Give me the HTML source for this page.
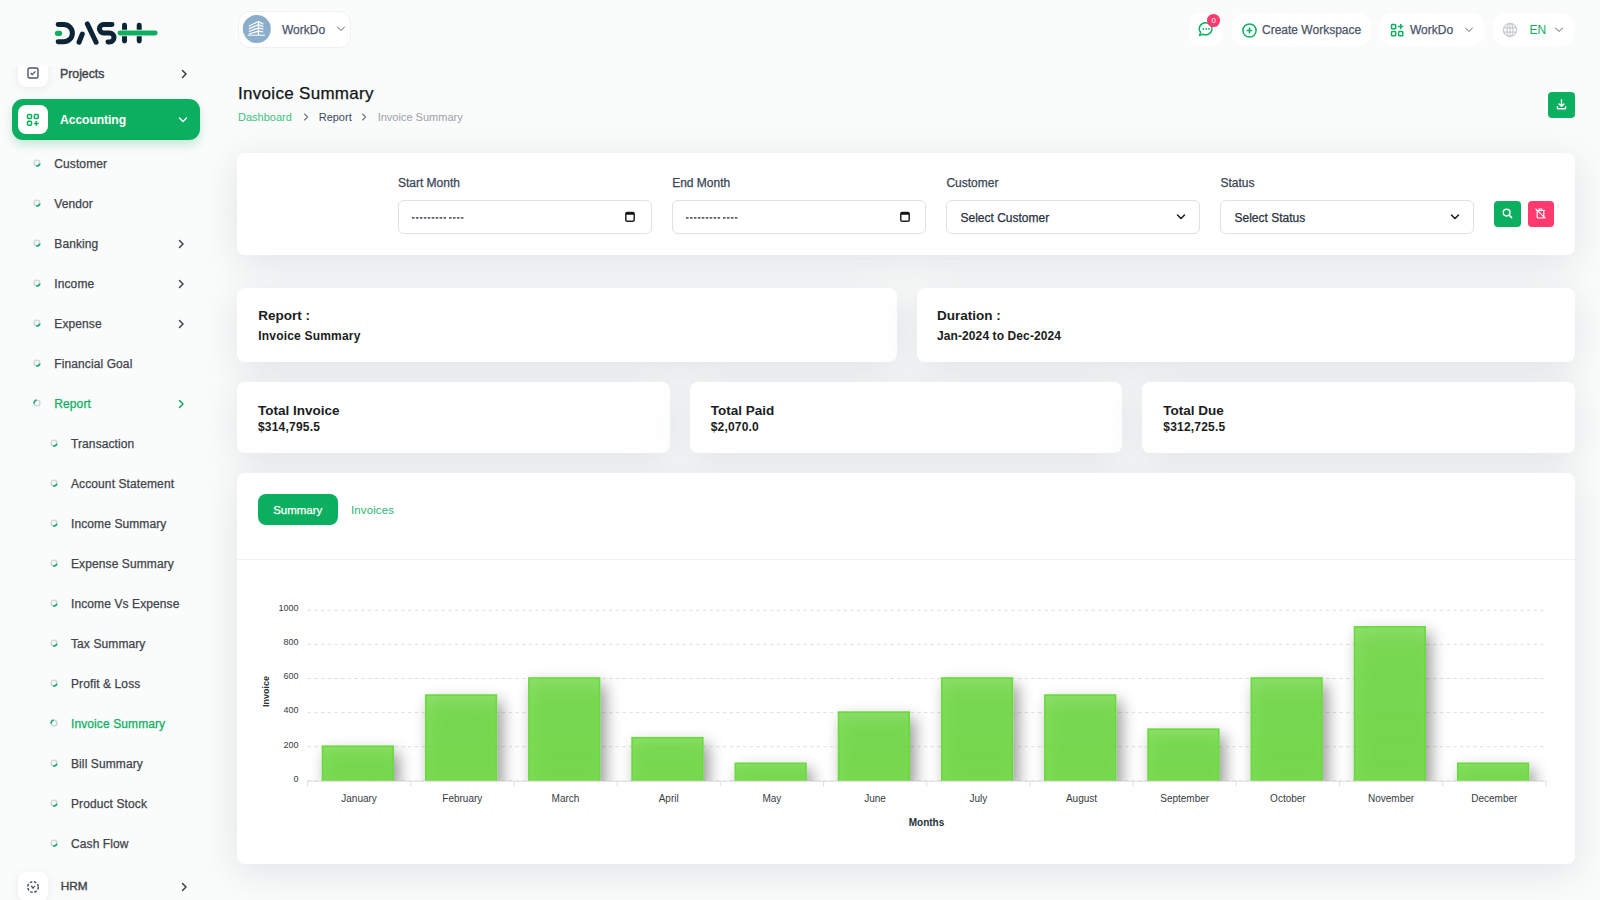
<!DOCTYPE html>
<html><head><meta charset="utf-8"><title>Invoice Summary</title>
<style>
html,body{margin:0;padding:0;}
body{width:1600px;height:900px;overflow:hidden;position:relative;background:#fafbfb;font-family:"Liberation Sans",sans-serif;}
.t{position:absolute;white-space:nowrap;line-height:1;}
.b{position:absolute;}
</style></head><body>
<svg class="b" style="left:40px;top:10px" width="140" height="45" viewBox="0 0 1600 514">
<g fill="none" stroke-linecap="round" stroke-width="57">
<path d="M208 166 H271 A99 99 0 0 1 271 364 H208" stroke="#0b2537"/>
<path d="M446 368 L483 275" stroke="#0b2537"/>
<path d="M541 159 L641 368" stroke="#0b2537"/>
<path d="M823 166 H727.5 A48.5 48.5 0 0 0 727.5 263 H794.5 A51.5 51.5 0 0 1 794.5 366 H777" stroke="#0b2537"/>
<path d="M966 173 V353 M1134 173 V353" stroke="#0b2537"/>
<path d="M200 266 H223" stroke="#0caf60" stroke-width="60"/>
<path d="M930 263 H1316" stroke="#fafbfb" stroke-width="74"/><path d="M915 263 H1316" stroke="#0caf60"/>
</g></svg><div class="b" style="left:0;top:66px;width:220px;height:40px;overflow:hidden"><div class="b" style="left:18px;top:-8px;width:29.5px;height:29px;background:#fff;border-radius:8px;box-shadow:0 2px 8px rgba(180,186,200,0.25);"></div><svg class="b" style="left:27px;top:1px" width="12" height="12" viewBox="0 0 12 12"><rect x="1" y="1" width="10" height="10" rx="1.5" fill="none" stroke="#4a5568" stroke-width="1.4"/><path d="M3.6 6 L5.3 7.6 L8.4 4.4" fill="none" stroke="#4a5568" stroke-width="1.3"/></svg></div><div class="t" style="left:60.00px;top:67.79px;font-size:12.3px;color:#3f434a;font-weight:400;-webkit-text-stroke:0.4px #3f434a;">Projects</div><svg class="b" style="left:180px;top:69px" width="8" height="10" viewBox="0 0 8 10"><path d="M2.5 1.5 L6 5 L2.5 8.5" fill="none" stroke="#3a3f46" stroke-width="1.5" stroke-linecap="round" stroke-linejoin="round"/></svg><div class="b" style="left:12px;top:99px;width:188px;height:41px;background:#0caf60;border-radius:11px;box-shadow:0 5px 10px rgba(12,175,96,0.22);"></div><div class="b" style="left:18px;top:105px;width:29.5px;height:29px;background:#fff;border-radius:8px;"></div><svg class="b" style="left:26px;top:113px" width="14" height="14" viewBox="0 0 14 14"><g fill="none" stroke="#0caf60" stroke-width="1.5"><rect x="1.5" y="1.5" width="4" height="4" rx="1"/><rect x="8.3" y="1.5" width="4" height="4" rx="1"/><rect x="1.5" y="8.3" width="4" height="4" rx="1"/><path d="M10.3 8 V12.8 M7.9 10.4 H12.7"/></g></svg><div class="t" style="left:60.00px;top:114.17px;font-size:12.2px;color:#fff;font-weight:700;letter-spacing:-0.1px;">Accounting</div><svg class="b" style="left:178px;top:115.5px" width="10" height="8" viewBox="0 0 10 8"><path d="M1.5 2 L5 5.5 L8.5 2" fill="none" stroke="#fff" stroke-width="1.3" stroke-linecap="round" stroke-linejoin="round"/></svg><svg class="b" style="left:32.1px;top:157.8px" width="10" height="10" viewBox="0 0 10 10"><circle cx="5" cy="5" r="2.9" fill="none" stroke="#cdd3dc" stroke-width="1.4"/><path d="M7.8 5.6 A2.9 2.9 0 0 1 4.2 7.8" fill="none" stroke="#0caf60" stroke-width="1.6"/></svg><div class="t" style="left:54.30px;top:157.84px;font-size:12px;color:#3f434a;font-weight:400;-webkit-text-stroke:0.25px #3f434a;letter-spacing:0.1px;">Customer</div><svg class="b" style="left:32.1px;top:197.8px" width="10" height="10" viewBox="0 0 10 10"><circle cx="5" cy="5" r="2.9" fill="none" stroke="#cdd3dc" stroke-width="1.4"/><path d="M7.8 5.6 A2.9 2.9 0 0 1 4.2 7.8" fill="none" stroke="#0caf60" stroke-width="1.6"/></svg><div class="t" style="left:54.30px;top:197.84px;font-size:12px;color:#3f434a;font-weight:400;-webkit-text-stroke:0.25px #3f434a;letter-spacing:0.1px;">Vendor</div><svg class="b" style="left:32.1px;top:237.8px" width="10" height="10" viewBox="0 0 10 10"><circle cx="5" cy="5" r="2.9" fill="none" stroke="#cdd3dc" stroke-width="1.4"/><path d="M7.8 5.6 A2.9 2.9 0 0 1 4.2 7.8" fill="none" stroke="#0caf60" stroke-width="1.6"/></svg><div class="t" style="left:54.30px;top:237.84px;font-size:12px;color:#3f434a;font-weight:400;-webkit-text-stroke:0.25px #3f434a;letter-spacing:0.1px;">Banking</div><svg class="b" style="left:177px;top:238.5px" width="8" height="10" viewBox="0 0 8 10"><path d="M2.5 1.5 L6 5 L2.5 8.5" fill="none" stroke="#3f434a" stroke-width="1.5" stroke-linecap="round" stroke-linejoin="round"/></svg><svg class="b" style="left:32.1px;top:277.8px" width="10" height="10" viewBox="0 0 10 10"><circle cx="5" cy="5" r="2.9" fill="none" stroke="#cdd3dc" stroke-width="1.4"/><path d="M7.8 5.6 A2.9 2.9 0 0 1 4.2 7.8" fill="none" stroke="#0caf60" stroke-width="1.6"/></svg><div class="t" style="left:54.30px;top:277.84px;font-size:12px;color:#3f434a;font-weight:400;-webkit-text-stroke:0.25px #3f434a;letter-spacing:0.1px;">Income</div><svg class="b" style="left:177px;top:278.5px" width="8" height="10" viewBox="0 0 8 10"><path d="M2.5 1.5 L6 5 L2.5 8.5" fill="none" stroke="#3f434a" stroke-width="1.5" stroke-linecap="round" stroke-linejoin="round"/></svg><svg class="b" style="left:32.1px;top:317.8px" width="10" height="10" viewBox="0 0 10 10"><circle cx="5" cy="5" r="2.9" fill="none" stroke="#cdd3dc" stroke-width="1.4"/><path d="M7.8 5.6 A2.9 2.9 0 0 1 4.2 7.8" fill="none" stroke="#0caf60" stroke-width="1.6"/></svg><div class="t" style="left:54.30px;top:317.84px;font-size:12px;color:#3f434a;font-weight:400;-webkit-text-stroke:0.25px #3f434a;letter-spacing:0.1px;">Expense</div><svg class="b" style="left:177px;top:318.5px" width="8" height="10" viewBox="0 0 8 10"><path d="M2.5 1.5 L6 5 L2.5 8.5" fill="none" stroke="#3f434a" stroke-width="1.5" stroke-linecap="round" stroke-linejoin="round"/></svg><svg class="b" style="left:32.1px;top:357.8px" width="10" height="10" viewBox="0 0 10 10"><circle cx="5" cy="5" r="2.9" fill="none" stroke="#cdd3dc" stroke-width="1.4"/><path d="M7.8 5.6 A2.9 2.9 0 0 1 4.2 7.8" fill="none" stroke="#0caf60" stroke-width="1.6"/></svg><div class="t" style="left:54.30px;top:357.84px;font-size:12px;color:#3f434a;font-weight:400;-webkit-text-stroke:0.25px #3f434a;letter-spacing:0.1px;">Financial Goal</div><svg class="b" style="left:32.1px;top:397.8px" width="10" height="10" viewBox="0 0 10 10"><circle cx="5" cy="5" r="2.9" fill="none" stroke="#cdd3dc" stroke-width="1.4"/><path d="M2.2 5.6 A2.9 2.9 0 0 1 4.6 2.1" fill="none" stroke="#0caf60" stroke-width="1.6"/></svg><div class="t" style="left:54.30px;top:397.84px;font-size:12px;color:#0caf60;font-weight:400;-webkit-text-stroke:0.25px #0caf60;letter-spacing:0.1px;">Report</div><svg class="b" style="left:177px;top:398.5px" width="8" height="10" viewBox="0 0 8 10"><path d="M2.5 1.5 L6 5 L2.5 8.5" fill="none" stroke="#0caf60" stroke-width="1.5" stroke-linecap="round" stroke-linejoin="round"/></svg><svg class="b" style="left:48.8px;top:437.8px" width="10" height="10" viewBox="0 0 10 10"><circle cx="5" cy="5" r="2.9" fill="none" stroke="#cdd3dc" stroke-width="1.4"/><path d="M7.8 5.6 A2.9 2.9 0 0 1 4.2 7.8" fill="none" stroke="#0caf60" stroke-width="1.6"/></svg><div class="t" style="left:71.00px;top:437.84px;font-size:12px;color:#3f434a;font-weight:400;-webkit-text-stroke:0.25px #3f434a;letter-spacing:0.1px;">Transaction</div><svg class="b" style="left:48.8px;top:477.8px" width="10" height="10" viewBox="0 0 10 10"><circle cx="5" cy="5" r="2.9" fill="none" stroke="#cdd3dc" stroke-width="1.4"/><path d="M7.8 5.6 A2.9 2.9 0 0 1 4.2 7.8" fill="none" stroke="#0caf60" stroke-width="1.6"/></svg><div class="t" style="left:71.00px;top:477.84px;font-size:12px;color:#3f434a;font-weight:400;-webkit-text-stroke:0.25px #3f434a;letter-spacing:0.1px;">Account Statement</div><svg class="b" style="left:48.8px;top:517.8px" width="10" height="10" viewBox="0 0 10 10"><circle cx="5" cy="5" r="2.9" fill="none" stroke="#cdd3dc" stroke-width="1.4"/><path d="M7.8 5.6 A2.9 2.9 0 0 1 4.2 7.8" fill="none" stroke="#0caf60" stroke-width="1.6"/></svg><div class="t" style="left:71.00px;top:517.84px;font-size:12px;color:#3f434a;font-weight:400;-webkit-text-stroke:0.25px #3f434a;letter-spacing:0.1px;">Income Summary</div><svg class="b" style="left:48.8px;top:557.8px" width="10" height="10" viewBox="0 0 10 10"><circle cx="5" cy="5" r="2.9" fill="none" stroke="#cdd3dc" stroke-width="1.4"/><path d="M7.8 5.6 A2.9 2.9 0 0 1 4.2 7.8" fill="none" stroke="#0caf60" stroke-width="1.6"/></svg><div class="t" style="left:71.00px;top:557.84px;font-size:12px;color:#3f434a;font-weight:400;-webkit-text-stroke:0.25px #3f434a;letter-spacing:0.1px;">Expense Summary</div><svg class="b" style="left:48.8px;top:597.8px" width="10" height="10" viewBox="0 0 10 10"><circle cx="5" cy="5" r="2.9" fill="none" stroke="#cdd3dc" stroke-width="1.4"/><path d="M7.8 5.6 A2.9 2.9 0 0 1 4.2 7.8" fill="none" stroke="#0caf60" stroke-width="1.6"/></svg><div class="t" style="left:71.00px;top:597.84px;font-size:12px;color:#3f434a;font-weight:400;-webkit-text-stroke:0.25px #3f434a;letter-spacing:0.1px;">Income Vs Expense</div><svg class="b" style="left:48.8px;top:637.8px" width="10" height="10" viewBox="0 0 10 10"><circle cx="5" cy="5" r="2.9" fill="none" stroke="#cdd3dc" stroke-width="1.4"/><path d="M7.8 5.6 A2.9 2.9 0 0 1 4.2 7.8" fill="none" stroke="#0caf60" stroke-width="1.6"/></svg><div class="t" style="left:71.00px;top:637.84px;font-size:12px;color:#3f434a;font-weight:400;-webkit-text-stroke:0.25px #3f434a;letter-spacing:0.1px;">Tax Summary</div><svg class="b" style="left:48.8px;top:677.8px" width="10" height="10" viewBox="0 0 10 10"><circle cx="5" cy="5" r="2.9" fill="none" stroke="#cdd3dc" stroke-width="1.4"/><path d="M7.8 5.6 A2.9 2.9 0 0 1 4.2 7.8" fill="none" stroke="#0caf60" stroke-width="1.6"/></svg><div class="t" style="left:71.00px;top:677.84px;font-size:12px;color:#3f434a;font-weight:400;-webkit-text-stroke:0.25px #3f434a;letter-spacing:0.1px;">Profit & Loss</div><svg class="b" style="left:48.8px;top:717.8px" width="10" height="10" viewBox="0 0 10 10"><circle cx="5" cy="5" r="2.9" fill="none" stroke="#cdd3dc" stroke-width="1.4"/><path d="M2.2 5.6 A2.9 2.9 0 0 1 4.6 2.1" fill="none" stroke="#0caf60" stroke-width="1.6"/></svg><div class="t" style="left:71.00px;top:717.84px;font-size:12px;color:#0caf60;font-weight:400;-webkit-text-stroke:0.25px #0caf60;letter-spacing:0.1px;">Invoice Summary</div><svg class="b" style="left:48.8px;top:757.8px" width="10" height="10" viewBox="0 0 10 10"><circle cx="5" cy="5" r="2.9" fill="none" stroke="#cdd3dc" stroke-width="1.4"/><path d="M7.8 5.6 A2.9 2.9 0 0 1 4.2 7.8" fill="none" stroke="#0caf60" stroke-width="1.6"/></svg><div class="t" style="left:71.00px;top:757.84px;font-size:12px;color:#3f434a;font-weight:400;-webkit-text-stroke:0.25px #3f434a;letter-spacing:0.1px;">Bill Summary</div><svg class="b" style="left:48.8px;top:797.8px" width="10" height="10" viewBox="0 0 10 10"><circle cx="5" cy="5" r="2.9" fill="none" stroke="#cdd3dc" stroke-width="1.4"/><path d="M7.8 5.6 A2.9 2.9 0 0 1 4.2 7.8" fill="none" stroke="#0caf60" stroke-width="1.6"/></svg><div class="t" style="left:71.00px;top:797.84px;font-size:12px;color:#3f434a;font-weight:400;-webkit-text-stroke:0.25px #3f434a;letter-spacing:0.1px;">Product Stock</div><svg class="b" style="left:48.8px;top:837.8px" width="10" height="10" viewBox="0 0 10 10"><circle cx="5" cy="5" r="2.9" fill="none" stroke="#cdd3dc" stroke-width="1.4"/><path d="M7.8 5.6 A2.9 2.9 0 0 1 4.2 7.8" fill="none" stroke="#0caf60" stroke-width="1.6"/></svg><div class="t" style="left:71.00px;top:837.84px;font-size:12px;color:#3f434a;font-weight:400;-webkit-text-stroke:0.25px #3f434a;letter-spacing:0.1px;">Cash Flow</div><div class="b" style="left:18px;top:871.5px;width:29.5px;height:29.5px;background:#fff;border-radius:8px;box-shadow:0 2px 8px rgba(180,186,200,0.25);"></div><svg class="b" style="left:26px;top:880px" width="14" height="14" viewBox="0 0 14 14"><circle cx="7" cy="7" r="5.3" fill="none" stroke="#4a5568" stroke-width="1.5" stroke-dasharray="2.6 1.6"/><path d="M5.3 5.8 L7 8.2 L8.7 5.8" fill="none" stroke="#4a5568" stroke-width="1.3"/></svg><div class="t" style="left:60.70px;top:881.31px;font-size:11.8px;color:#3f434a;font-weight:400;-webkit-text-stroke:0.4px #3f434a;">HRM</div><svg class="b" style="left:180px;top:882px" width="8" height="10" viewBox="0 0 8 10"><path d="M2.5 1.5 L6 5 L2.5 8.5" fill="none" stroke="#3a3f46" stroke-width="1.5" stroke-linecap="round" stroke-linejoin="round"/></svg><div class="b" style="left:238px;top:11px;width:113px;height:37px;background:#fff;border:1px solid #eef0f2;border-radius:12px;box-sizing:border-box;"></div><svg class="b" style="left:242px;top:15px" width="29" height="29" viewBox="0 0 29 29"><circle cx="14.8" cy="14" r="14" fill="#8aadcc"/><path d="M1.6 18 A14 14 0 0 0 9 27.2" fill="none" stroke="#c9f0d6" stroke-width="0.9"/><g fill="none" stroke="#fff" stroke-width="1.25" stroke-linecap="butt"><path d="M6.8 11.2 L16.5 6.4 L21.4 9.2"/><path d="M6.8 13.9 L16.5 9.6 L21.4 11.6"/><path d="M6.8 16.5 L16.5 12.8 L21.4 14.2"/><path d="M6.8 19 L16.5 16.2 L21.4 17"/><path d="M16.5 6.4 V20"/></g><rect x="5.6" y="19.6" width="17.4" height="1.3" fill="#fff" opacity="0.8"/></svg><div class="t" style="left:282.00px;top:23.74px;font-size:12px;color:#4a5568;font-weight:400;-webkit-text-stroke:0.25px #4a5568;">WorkDo</div><svg class="b" style="left:335.5px;top:25.3px" width="10" height="8" viewBox="0 0 10 8"><path d="M1.5 2 L5 5.5 L8.5 2" fill="none" stroke="#5a6270" stroke-width="1.0" stroke-linecap="round" stroke-linejoin="round"/></svg><div class="b" style="left:1188.5px;top:12.5px;width:34.5px;height:33.0px;background:#fff;border-radius:10px;"></div><svg class="b" style="left:1197px;top:20px" width="18" height="18" viewBox="0 0 18 18"><path d="M9 2.8 A6.3 6 0 1 1 6 14.2 L2.6 15.4 L3.6 12.4 A6.3 6 0 0 1 9 2.8Z" fill="none" stroke="#0caf60" stroke-width="1.5" stroke-linejoin="round"/><circle cx="6.3" cy="8.9" r="0.85" fill="#0caf60"/><circle cx="9.1" cy="8.9" r="0.85" fill="#0caf60"/><circle cx="11.9" cy="8.9" r="0.85" fill="#0caf60"/></svg><div class="b" style="left:1207.4px;top:14.3px;width:12.6px;height:12.6px;border-radius:50%;background:#ff3a6e;"></div><div class="t" style="left:1213.70px;top:17.43px;font-size:8px;color:#fff;font-weight:400;transform:translateX(-50%);">0</div><div class="b" style="left:1232px;top:12.5px;width:139px;height:33.0px;background:#fff;border-radius:12px;"></div><svg class="b" style="left:1241px;top:22px" width="17" height="17" viewBox="0 0 17 17"><circle cx="8.5" cy="8.5" r="6.6" fill="none" stroke="#0caf60" stroke-width="1.5"/><path d="M8.5 5.6 V11.4 M5.6 8.5 H11.4" stroke="#0caf60" stroke-width="1.6"/></svg><div class="t" style="left:1262.00px;top:23.84px;font-size:12px;color:#4a5568;font-weight:400;-webkit-text-stroke:0.25px #4a5568;">Create Workspace</div><div class="b" style="left:1380px;top:12.5px;width:104px;height:33.0px;background:#fff;border-radius:12px;"></div><svg class="b" style="left:1390px;top:23px" width="15" height="15" viewBox="0 0 15 15"><g fill="none" stroke="#0caf60" stroke-width="1.5"><rect x="1.5" y="1.5" width="4.2" height="4.2" rx="0.8"/><rect x="1.5" y="8.6" width="4.2" height="4.2" rx="0.8"/><rect x="8.6" y="8.6" width="4.2" height="4.2" rx="0.8"/><path d="M10.7 1 V6.2 M8.1 3.6 H13.3"/></g></svg><div class="t" style="left:1410.00px;top:23.74px;font-size:12px;color:#4a5568;font-weight:400;-webkit-text-stroke:0.25px #4a5568;">WorkDo</div><svg class="b" style="left:1464px;top:25.8px" width="10" height="8" viewBox="0 0 10 8"><path d="M1.5 2 L5 5.5 L8.5 2" fill="none" stroke="#5a6270" stroke-width="1.0" stroke-linecap="round" stroke-linejoin="round"/></svg><div class="b" style="left:1493px;top:12.5px;width:81px;height:33.0px;background:#fff;border-radius:12px;"></div><svg class="b" style="left:1502px;top:22px" width="16" height="16" viewBox="0 0 16 16"><g fill="none" stroke="#c7cbd1" stroke-width="1.2"><circle cx="8" cy="8" r="6.6"/><ellipse cx="8" cy="8" rx="3" ry="6.6"/><path d="M1.6 5.8 H14.4 M1.6 10.2 H14.4 M8 1.4 V14.6"/></g></svg><div class="t" style="left:1529.60px;top:23.84px;font-size:12px;color:#0caf60;font-weight:400;">EN</div><svg class="b" style="left:1554.2px;top:25.8px" width="10" height="8" viewBox="0 0 10 8"><path d="M1.5 2 L5 5.5 L8.5 2" fill="none" stroke="#5a6270" stroke-width="1.0" stroke-linecap="round" stroke-linejoin="round"/></svg><div class="t" style="left:238.00px;top:85.41px;font-size:17px;color:#111418;font-weight:400;-webkit-text-stroke:0.25px #111418;letter-spacing:0.3px;">Invoice Summary</div><div class="t" style="left:238.00px;top:112.09px;font-size:11px;color:#3fbf80;font-weight:400;">Dashboard</div><svg class="b" style="left:302.7px;top:113.0px" width="6" height="8" viewBox="0 0 6 8"><path d="M1.6 1 L4.6 4 L1.6 7" fill="none" stroke="#6b7280" stroke-width="1.1" stroke-linecap="round" stroke-linejoin="round"/></svg><div class="t" style="left:318.70px;top:112.09px;font-size:11px;color:#3e4a5c;font-weight:400;">Report</div><svg class="b" style="left:361.4px;top:113.0px" width="6" height="8" viewBox="0 0 6 8"><path d="M1.6 1 L4.6 4 L1.6 7" fill="none" stroke="#6b7280" stroke-width="1.1" stroke-linecap="round" stroke-linejoin="round"/></svg><div class="t" style="left:377.70px;top:112.09px;font-size:11px;color:#9aa0a8;font-weight:400;">Invoice Summary</div><div class="b" style="left:1548px;top:92px;width:27px;height:25.5px;background:#0caf60;border-radius:4px;box-shadow:0 0 0 1px #fff;"></div><svg class="b" style="left:1555px;top:98px" width="13" height="13" viewBox="0 0 13 13"><path d="M6.5 1.8 V8.2 M4 5.9 L6.5 8.3 L9 5.9" fill="none" stroke="#fff" stroke-width="1.4" stroke-linecap="round" stroke-linejoin="round"/><path d="M2.4 8.8 V9.6 A1 1 0 0 0 3.4 10.8 H9.6 A1 1 0 0 0 10.6 9.6 V8.8" fill="none" stroke="#fff" stroke-width="1.4" stroke-linecap="round"/></svg><div class="b" style="left:237px;top:153px;width:1338px;height:102px;background:#fff;border-radius:8px;box-shadow:0 8px 36px rgba(172,180,186,0.32);"></div><div class="t" style="left:397.90px;top:177.34px;font-size:12px;color:#3a4556;font-weight:400;-webkit-text-stroke:0.25px #3a4556;">Start Month</div><div class="b" style="left:397.5px;top:200.3px;width:254.0px;height:33.29999999999998px;border:1px solid #dde2e7;border-radius:6px;box-sizing:border-box;background:#fff;"></div><svg class="b" style="left:412.0px;top:216px" width="52" height="4" viewBox="0 0 52 4"><path d="M0 1.9 H34.5 M37 1.9 H51.6" stroke="#5f656d" stroke-width="1.6" stroke-dasharray="2.6 1.34"/></svg><svg class="b" style="left:625.3px;top:210.5px" width="10" height="11" viewBox="0 0 10 11"><rect x="0.8" y="1.6" width="8.4" height="8.6" rx="1.3" fill="none" stroke="#222" stroke-width="1.5"/><rect x="0.8" y="1.4" width="8.4" height="2.4" rx="0.8" fill="#111"/></svg><div class="t" style="left:672.20px;top:177.34px;font-size:12px;color:#3a4556;font-weight:400;-webkit-text-stroke:0.25px #3a4556;">End Month</div><div class="b" style="left:671.8px;top:200.3px;width:254.0px;height:33.29999999999998px;border:1px solid #dde2e7;border-radius:6px;box-sizing:border-box;background:#fff;"></div><svg class="b" style="left:686.3px;top:216px" width="52" height="4" viewBox="0 0 52 4"><path d="M0 1.9 H34.5 M37 1.9 H51.6" stroke="#5f656d" stroke-width="1.6" stroke-dasharray="2.6 1.34"/></svg><svg class="b" style="left:899.5999999999999px;top:210.5px" width="10" height="11" viewBox="0 0 10 11"><rect x="0.8" y="1.6" width="8.4" height="8.6" rx="1.3" fill="none" stroke="#222" stroke-width="1.5"/><rect x="0.8" y="1.4" width="8.4" height="2.4" rx="0.8" fill="#111"/></svg><div class="t" style="left:946.40px;top:177.34px;font-size:12px;color:#3a4556;font-weight:400;-webkit-text-stroke:0.25px #3a4556;">Customer</div><div class="b" style="left:946px;top:200.3px;width:254px;height:33.29999999999998px;border:1px solid #dde2e7;border-radius:6px;box-sizing:border-box;background:#fff;"></div><div class="t" style="left:960.50px;top:211.54px;font-size:12px;color:#293240;font-weight:400;-webkit-text-stroke:0.25px #293240;">Select Customer</div><svg class="b" style="left:1176px;top:213px" width="10" height="8" viewBox="0 0 10 8"><path d="M1.5 2 L5 5.5 L8.5 2" fill="none" stroke="#1f2328" stroke-width="1.6" stroke-linecap="round" stroke-linejoin="round"/></svg><div class="t" style="left:1220.40px;top:177.34px;font-size:12px;color:#3a4556;font-weight:400;-webkit-text-stroke:0.25px #3a4556;">Status</div><div class="b" style="left:1220px;top:200.3px;width:254px;height:33.29999999999998px;border:1px solid #dde2e7;border-radius:6px;box-sizing:border-box;background:#fff;"></div><div class="t" style="left:1234.50px;top:211.54px;font-size:12px;color:#293240;font-weight:400;-webkit-text-stroke:0.25px #293240;">Select Status</div><svg class="b" style="left:1450px;top:213px" width="10" height="8" viewBox="0 0 10 8"><path d="M1.5 2 L5 5.5 L8.5 2" fill="none" stroke="#1f2328" stroke-width="1.6" stroke-linecap="round" stroke-linejoin="round"/></svg><div class="b" style="left:1494px;top:201px;width:27px;height:25.599999999999994px;background:#0caf60;border-radius:4px;"></div><svg class="b" style="left:1501px;top:207px" width="13" height="13" viewBox="0 0 13 13"><circle cx="5.6" cy="5.6" r="3.4" fill="none" stroke="#fff" stroke-width="1.4"/><path d="M8.1 8.1 L10.6 10.6" stroke="#fff" stroke-width="1.5" stroke-linecap="round"/></svg><div class="b" style="left:1527.6px;top:201px;width:26.40000000000009px;height:25.599999999999994px;background:#ff3a6e;border-radius:4px;"></div><svg class="b" style="left:1534px;top:207px" width="13" height="13" viewBox="0 0 13 13"><g fill="none" stroke="#fff" stroke-width="1.2" stroke-linecap="round"><path d="M3.2 4.5 V10 A1 1 0 0 0 4.2 11 H8.8 A1 1 0 0 0 9.8 10 V4.5"/><path d="M2.4 3.5 H10.6 M5.2 3.3 V2 H7.8 V3.3"/><path d="M1.8 1.8 L11.2 11.2"/></g></svg><div class="b" style="left:237px;top:288px;width:659.7px;height:74.30000000000001px;background:#fff;border-radius:8px;box-shadow:0 8px 36px rgba(172,180,186,0.32);"></div><div class="b" style="left:916.7px;top:288px;width:658.3px;height:74.30000000000001px;background:#fff;border-radius:8px;box-shadow:0 8px 36px rgba(172,180,186,0.32);"></div><div class="t" style="left:258.20px;top:309.17px;font-size:13.5px;color:#1a1d21;font-weight:700;">Report :</div><div class="t" style="left:258.20px;top:329.64px;font-size:12px;color:#1a1d21;font-weight:700;letter-spacing:0.2px;">Invoice Summary</div><div class="t" style="left:937.00px;top:309.17px;font-size:13.5px;color:#1a1d21;font-weight:700;">Duration :</div><div class="t" style="left:937.00px;top:329.64px;font-size:12px;color:#1a1d21;font-weight:700;letter-spacing:0.1px;">Jan-2024 to Dec-2024</div><div class="b" style="left:237.0px;top:382.3px;width:432.66999999999996px;height:70.69999999999999px;background:#fff;border-radius:8px;box-shadow:0 8px 36px rgba(172,180,186,0.32);"></div><div class="t" style="left:258.00px;top:403.97px;font-size:13.5px;color:#1a1d21;font-weight:700;">Total Invoice</div><div class="t" style="left:258.00px;top:421.14px;font-size:12px;color:#1a1d21;font-weight:700;letter-spacing:0.2px;">$314,795.5</div><div class="b" style="left:689.67px;top:382.3px;width:432.66999999999996px;height:70.69999999999999px;background:#fff;border-radius:8px;box-shadow:0 8px 36px rgba(172,180,186,0.32);"></div><div class="t" style="left:710.67px;top:403.97px;font-size:13.5px;color:#1a1d21;font-weight:700;">Total Paid</div><div class="t" style="left:710.67px;top:421.14px;font-size:12px;color:#1a1d21;font-weight:700;letter-spacing:0.2px;">$2,070.0</div><div class="b" style="left:1142.34px;top:382.3px;width:432.6700000000001px;height:70.69999999999999px;background:#fff;border-radius:8px;box-shadow:0 8px 36px rgba(172,180,186,0.32);"></div><div class="t" style="left:1163.34px;top:403.97px;font-size:13.5px;color:#1a1d21;font-weight:700;">Total Due</div><div class="t" style="left:1163.34px;top:421.14px;font-size:12px;color:#1a1d21;font-weight:700;letter-spacing:0.2px;">$312,725.5</div><div class="b" style="left:237px;top:473px;width:1338px;height:391px;background:#fff;border-radius:8px;box-shadow:0 8px 36px rgba(172,180,186,0.32);"></div><div class="b" style="left:258px;top:494.2px;width:79.5px;height:30.599999999999966px;background:#0caf60;border-radius:8px;"></div><div class="t" style="left:297.75px;top:505.27px;font-size:11.5px;color:#fff;font-weight:400;-webkit-text-stroke:0.25px #fff;transform:translateX(-50%);">Summary</div><div class="t" style="left:351.00px;top:505.27px;font-size:11.5px;color:#2bb673;font-weight:400;letter-spacing:0.1px;">Invoices</div><div class="b" style="left:237px;top:559px;width:1338px;height:1px;background:#f0f1f3;"></div><svg class="b" style="left:0;top:0" width="1600" height="900" viewBox="0 0 1600 900" font-family="Liberation Sans, sans-serif"><defs><filter id="ds" x="-50%" y="-50%" width="200%" height="200%"><feDropShadow dx="5" dy="7" stdDeviation="7.5" flood-color="#000" flood-opacity="0.45"/></filter><clipPath id="pc"><rect x="300" y="570" width="1260" height="211"/></clipPath><linearGradient id="bg" x1="0" y1="0" x2="0" y2="1"><stop offset="0" stop-color="#6fd943" stop-opacity="0.80"/><stop offset="0.25" stop-color="#6fd943" stop-opacity="0.88"/><stop offset="1" stop-color="#6fd943" stop-opacity="0.90"/></linearGradient></defs><line x1="307.5" y1="780.80" x2="1545.90" y2="780.80" stroke="#e0e0e0" stroke-width="1" stroke-dasharray="3.5 3.2"/><text x="298.5" y="781.60" text-anchor="end" font-size="9" fill="#373d3f">0</text><line x1="307.5" y1="746.70" x2="1545.90" y2="746.70" stroke="#e0e0e0" stroke-width="1" stroke-dasharray="3.5 3.2"/><text x="298.5" y="747.50" text-anchor="end" font-size="9" fill="#373d3f">200</text><line x1="307.5" y1="712.60" x2="1545.90" y2="712.60" stroke="#e0e0e0" stroke-width="1" stroke-dasharray="3.5 3.2"/><text x="298.5" y="713.40" text-anchor="end" font-size="9" fill="#373d3f">400</text><line x1="307.5" y1="678.50" x2="1545.90" y2="678.50" stroke="#e0e0e0" stroke-width="1" stroke-dasharray="3.5 3.2"/><text x="298.5" y="679.30" text-anchor="end" font-size="9" fill="#373d3f">600</text><line x1="307.5" y1="644.40" x2="1545.90" y2="644.40" stroke="#e0e0e0" stroke-width="1" stroke-dasharray="3.5 3.2"/><text x="298.5" y="645.20" text-anchor="end" font-size="9" fill="#373d3f">800</text><line x1="307.5" y1="610.30" x2="1545.90" y2="610.30" stroke="#e0e0e0" stroke-width="1" stroke-dasharray="3.5 3.2"/><text x="298.5" y="611.10" text-anchor="end" font-size="9" fill="#373d3f">1000</text><text x="359.10" y="801.7" text-anchor="middle" font-size="10" fill="#373d3f">January</text><text x="462.30" y="801.7" text-anchor="middle" font-size="10" fill="#373d3f">February</text><text x="565.50" y="801.7" text-anchor="middle" font-size="10" fill="#373d3f">March</text><text x="668.70" y="801.7" text-anchor="middle" font-size="10" fill="#373d3f">April</text><text x="771.90" y="801.7" text-anchor="middle" font-size="10" fill="#373d3f">May</text><text x="875.10" y="801.7" text-anchor="middle" font-size="10" fill="#373d3f">June</text><text x="978.30" y="801.7" text-anchor="middle" font-size="10" fill="#373d3f">July</text><text x="1081.50" y="801.7" text-anchor="middle" font-size="10" fill="#373d3f">August</text><text x="1184.70" y="801.7" text-anchor="middle" font-size="10" fill="#373d3f">September</text><text x="1287.90" y="801.7" text-anchor="middle" font-size="10" fill="#373d3f">October</text><text x="1391.10" y="801.7" text-anchor="middle" font-size="10" fill="#373d3f">November</text><text x="1494.30" y="801.7" text-anchor="middle" font-size="10" fill="#373d3f">December</text><g clip-path="url(#pc)"><rect x="322.50" y="746.20" width="70.7" height="36.60" fill="url(#bg)" stroke="#6bd83f" stroke-width="1.6" filter="url(#ds)"/><rect x="425.70" y="695.05" width="70.7" height="87.75" fill="url(#bg)" stroke="#6bd83f" stroke-width="1.6" filter="url(#ds)"/><rect x="528.90" y="678.00" width="70.7" height="104.80" fill="url(#bg)" stroke="#6bd83f" stroke-width="1.6" filter="url(#ds)"/><rect x="632.10" y="737.67" width="70.7" height="45.12" fill="url(#bg)" stroke="#6bd83f" stroke-width="1.6" filter="url(#ds)"/><rect x="735.30" y="763.25" width="70.7" height="19.55" fill="url(#bg)" stroke="#6bd83f" stroke-width="1.6" filter="url(#ds)"/><rect x="838.50" y="712.10" width="70.7" height="70.70" fill="url(#bg)" stroke="#6bd83f" stroke-width="1.6" filter="url(#ds)"/><rect x="941.70" y="678.00" width="70.7" height="104.80" fill="url(#bg)" stroke="#6bd83f" stroke-width="1.6" filter="url(#ds)"/><rect x="1044.90" y="695.05" width="70.7" height="87.75" fill="url(#bg)" stroke="#6bd83f" stroke-width="1.6" filter="url(#ds)"/><rect x="1148.10" y="729.15" width="70.7" height="53.65" fill="url(#bg)" stroke="#6bd83f" stroke-width="1.6" filter="url(#ds)"/><rect x="1251.30" y="678.00" width="70.7" height="104.80" fill="url(#bg)" stroke="#6bd83f" stroke-width="1.6" filter="url(#ds)"/><rect x="1354.50" y="626.85" width="70.7" height="155.95" fill="url(#bg)" stroke="#6bd83f" stroke-width="1.6" filter="url(#ds)"/><rect x="1457.70" y="763.25" width="70.7" height="19.55" fill="url(#bg)" stroke="#6bd83f" stroke-width="1.6" filter="url(#ds)"/></g><line x1="307.5" y1="781.30" x2="1545.90" y2="781.30" stroke="#e0e0e0" stroke-width="1"/><line x1="307.50" y1="780.80" x2="307.50" y2="786.30" stroke="#e0e0e0" stroke-width="1"/><line x1="410.70" y1="780.80" x2="410.70" y2="786.30" stroke="#e0e0e0" stroke-width="1"/><line x1="513.90" y1="780.80" x2="513.90" y2="786.30" stroke="#e0e0e0" stroke-width="1"/><line x1="617.10" y1="780.80" x2="617.10" y2="786.30" stroke="#e0e0e0" stroke-width="1"/><line x1="720.30" y1="780.80" x2="720.30" y2="786.30" stroke="#e0e0e0" stroke-width="1"/><line x1="823.50" y1="780.80" x2="823.50" y2="786.30" stroke="#e0e0e0" stroke-width="1"/><line x1="926.70" y1="780.80" x2="926.70" y2="786.30" stroke="#e0e0e0" stroke-width="1"/><line x1="1029.90" y1="780.80" x2="1029.90" y2="786.30" stroke="#e0e0e0" stroke-width="1"/><line x1="1133.10" y1="780.80" x2="1133.10" y2="786.30" stroke="#e0e0e0" stroke-width="1"/><line x1="1236.30" y1="780.80" x2="1236.30" y2="786.30" stroke="#e0e0e0" stroke-width="1"/><line x1="1339.50" y1="780.80" x2="1339.50" y2="786.30" stroke="#e0e0e0" stroke-width="1"/><line x1="1442.70" y1="780.80" x2="1442.70" y2="786.30" stroke="#e0e0e0" stroke-width="1"/><line x1="1545.90" y1="780.80" x2="1545.90" y2="786.30" stroke="#e0e0e0" stroke-width="1"/><text x="926.5" y="825.8" text-anchor="middle" font-size="10" font-weight="700" fill="#263238">Months</text><text transform="translate(268.8 691.6) rotate(-90)" text-anchor="middle" font-size="9" font-weight="700" fill="#263238">Invoice</text></svg>
</body></html>
